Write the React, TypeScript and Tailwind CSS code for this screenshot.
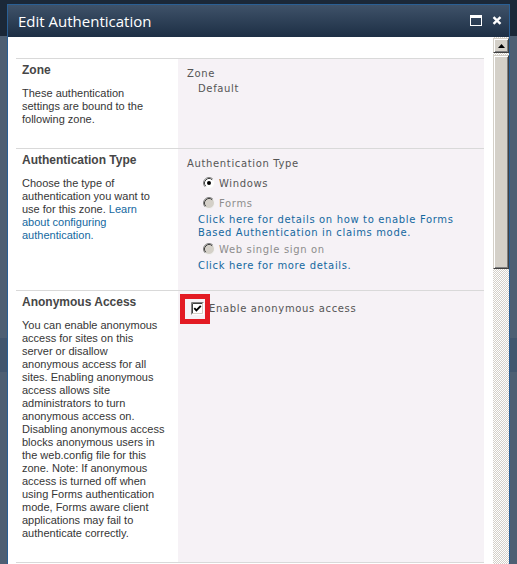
import type { ReactNode } from "react";

const leftFont = "font-['Liberation_Sans',Arial,sans-serif]";
const rightFont = "font-['DejaVu_Sans',Verdana,sans-serif] text-[10px] tracking-[0.65px]";

function Radio({ checked, disabled }: { checked?: boolean; disabled?: boolean }) {
  return (
    <svg width="12" height="12" viewBox="0 0 12 12" className="shrink-0">
      <circle cx="6" cy="6" r="5.5" fill={disabled ? "#d4d0c8" : "#ffffff"} />
      <path d="M2.11 9.89 A5.5 5.5 0 0 1 9.89 2.11" stroke="#808080" fill="none" />
      <path d="M2.82 9.18 A4.5 4.5 0 0 1 9.18 2.82" stroke="#404040" fill="none" />
      <path d="M9.89 2.11 A5.5 5.5 0 0 1 2.11 9.89" stroke="#f4f4f4" fill="none" />
      {checked && <circle cx="6" cy="6" r="2" fill="#000" />}
    </svg>
  );
}

function Checkbox() {
  return (
    <svg width="13" height="13" viewBox="0 0 13 13" className="shrink-0">
      <rect x="0" y="0" width="13" height="13" fill="#ffffff" />
      <path d="M0.5 12.5 V0.5 H12.5" stroke="#808080" fill="none" />
      <path d="M1.5 11.5 V1.5 H11.5" stroke="#404040" fill="none" />
      <path d="M1.5 11.5 H11.5 V1.5" stroke="#d4d0c8" fill="none" />
      <path d="M3.3 6.2 L5.4 8.4 L9.8 3.8" stroke="#000" strokeWidth="1.9" fill="none" />
    </svg>
  );
}

function Section({
  title,
  children,
  field,
}: {
  title: string;
  children: ReactNode;
  field: ReactNode;
}) {
  return (
    <div className="flex border-t border-[#d9d9d9]">
      <div className={`w-[162px] shrink-0 pb-[22px] pl-[6px] pt-[5px] ${leftFont}`}>
        <h3 className="text-[12px] font-bold leading-[13px] text-[#464646]">{title}</h3>
        <p className="mt-[10px] whitespace-nowrap text-[11px] leading-[13px] text-[#363636]">
          {children}
        </p>
      </div>
      <div className={`relative flex-1 bg-[#f6f2f6] pl-[9px] pt-[7px] ${rightFont}`}>{field}</div>
    </div>
  );
}

function Scrollbar() {
  const bevel =
    "border border-t-[#d4d0c8] border-l-[#d4d0c8] border-r-[#404040] border-b-[#404040] bg-[#d4d0c8] shadow-[inset_1px_1px_0_#ffffff,inset_-1px_-1px_0_#808080]";
  return (
    <div className="flex w-[16px] shrink-0 flex-col bg-[repeating-conic-gradient(#d4d0c8_0%_25%,#ffffff_0%_50%)] bg-[length:2px_2px]">
      <div className={`mt-[1px] flex h-[15px] items-center justify-center ${bevel}`}>
        <svg width="7" height="4" viewBox="0 0 7 4">
          <path d="M3.5 0 L7 4 H0 Z" fill="#000" />
        </svg>
      </div>
      <div className={`mt-[2px] h-[214px] ${bevel}`} />
    </div>
  );
}

export default function App() {
  return (
    <div className="h-[564px] w-[517px] overflow-hidden bg-[linear-gradient(#1b2838_0_36px,#4e5f73_36px_338px,#42566e_338px_372px,#4e5f73_372px)] pl-[7px] pt-[4px]">
      <div className="flex h-[580px] w-[503px] flex-col border border-[#2a5f94] bg-white">
        {/* title bar */}
        <div className="flex h-[32px] shrink-0 items-center justify-between bg-gradient-to-b from-[#3f5269] to-[#1d2f45] pl-[10px] pr-[7px]">
          <span className="font-['Open_Sans',Arial,sans-serif] text-[15px] text-white">
            Edit Authentication
          </span>
          <div className="mb-[1px] flex items-center gap-[10px]">
            <svg width="12" height="11" viewBox="0 0 12 11">
              <rect x="0.5" y="0.5" width="11" height="10" stroke="#fff" fill="none" />
              <rect x="0" y="0" width="12" height="3" fill="#fff" />
            </svg>
            <svg width="10" height="9" viewBox="0 0 10 9">
              <path d="M1.5 1.2 L8.5 7.8 M8.5 1.2 L1.5 7.8" stroke="#fff" strokeWidth="2.4" />
            </svg>
          </div>
        </div>

        <div className="flex flex-1">
          <div className="flex-1 pl-[8px] pt-[21px]">
            <div className="w-[468px] border-b border-[#d9d9d9]">
              <Section
                title="Zone"
                field={
                  <div className="leading-[15px] text-[#555]">
                    <div>Zone</div>
                    <div className="pl-[11px]">Default</div>
                  </div>
                }
              >
                These authentication
                <br />
                settings are bound to the
                <br />
                following zone.
              </Section>

              <Section
                title="Authentication Type"
                field={
                  <div className="pb-[18px] text-[#555]">
                    <div className="leading-[15px]">Authentication Type</div>
                    <div className="pl-[11px]">
                      <label className="mt-[2px] flex h-[20px] items-center gap-[4px] pl-[5px]">
                        <Radio checked />
                        <span>Windows</span>
                      </label>
                      <label className="flex h-[20px] items-center gap-[4px] pl-[5px] text-[#8d8d8d]">
                        <Radio disabled />
                        <span>Forms</span>
                      </label>
                      <a className="block leading-[13px] text-[#1468a0]">
                        Click here for details on how to enable Forms
                        <br />
                        Based Authentication in claims mode.
                      </a>
                      <label className="flex h-[20px] items-center gap-[4px] pl-[5px] text-[#8d8d8d]">
                        <Radio disabled />
                        <span>Web single sign on</span>
                      </label>
                      <a className="block leading-[13px] text-[#1468a0]">
                        Click here for more details.
                      </a>
                    </div>
                  </div>
                }
              >
                Choose the type of
                <br />
                authentication you want to
                <br />
                use for this zone. <a className="text-[#1468a0]">Learn</a>
                <br />
                <a className="text-[#1468a0]">
                  about configuring
                  <br />
                  authentication.
                </a>
              </Section>

              <Section
                title="Anonymous Access"
                field={
                  <>
                    <label className="mt-[4px] flex h-[13px] items-center gap-[5px] pl-[4px] text-[#555]">
                      <Checkbox />
                      <span>Enable anonymous access</span>
                    </label>
                    <span className="absolute left-[2px] top-[3px] h-[30px] w-[30px] border-[5px] border-[#e31b23]" />
                  </>
                }
              >
                You can enable anonymous
                <br />
                access for sites on this
                <br />
                server or disallow
                <br />
                anonymous access for all
                <br />
                sites. Enabling anonymous
                <br />
                access allows site
                <br />
                administrators to turn
                <br />
                anonymous access on.
                <br />
                Disabling anonymous access
                <br />
                blocks anonymous users in
                <br />
                the web.config file for this
                <br />
                zone. Note: If anonymous
                <br />
                access is turned off when
                <br />
                using Forms authentication
                <br />
                mode, Forms aware client
                <br />
                applications may fail to
                <br />
                authenticate correctly.
              </Section>
            </div>
          </div>
          <Scrollbar />
        </div>
      </div>
    </div>
  );
}
